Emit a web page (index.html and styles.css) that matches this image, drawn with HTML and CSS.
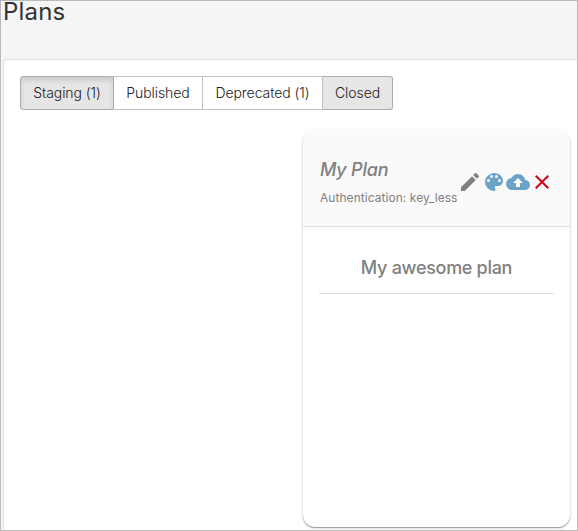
FILE: index.html
```html
<!DOCTYPE html>
<html lang="en">
<head>
<meta charset="utf-8">
<title>Plans</title>
<link rel="stylesheet" href="styles.css">
</head>
<body>
<main class="page">
  <h1 class="title"><span>Plans</span></h1>
  <section class="panel">
    <div class="tabs">
      <button class="tab tab-staging active"><span>Staging (1)</span></button>
      <button class="tab tab-published"><span>Published</span></button>
      <button class="tab tab-deprecated"><span>Deprecated (1)</span></button>
      <button class="tab tab-closed hover"><span>Closed</span></button>
    </div>
    <article class="card">
      <header class="card-head">
        <div class="info">
          <h2 class="name"><span>My Plan</span></h2>
          <p class="auth"><span>Authentication: key_less</span></p>
        </div>
        <div class="actions">
          <svg class="edit" viewBox="0 0 24 24"><path d="M3 17.25V21h3.75L17.81 9.94l-3.75-3.75L3 17.25zM20.71 7.04a1 1 0 0 0 0-1.41l-2.34-2.34a1 1 0 0 0-1.41 0l-1.83 1.83 3.75 3.75 1.83-1.83z"/></svg>
          <svg class="design" viewBox="0 0 24 24"><path d="M12 3a9 9 0 0 0 0 18c.83 0 1.5-.67 1.5-1.5 0-.39-.15-.74-.39-1.01-.23-.26-.38-.61-.38-.99 0-.83.67-1.5 1.5-1.5H16c2.76 0 5-2.24 5-5 0-4.42-4.03-8-9-8zm-5.5 9a1.5 1.5 0 1 1 0-3 1.5 1.5 0 0 1 0 3zm3-4a1.5 1.5 0 1 1 0-3 1.5 1.5 0 0 1 0 3zm5 0a1.5 1.5 0 1 1 0-3 1.5 1.5 0 0 1 0 3zm3 4a1.5 1.5 0 1 1 0-3 1.5 1.5 0 0 1 0 3z"/></svg>
          <svg class="publish" viewBox="0 0 24 24"><path d="M19.35 10.04A7.49 7.49 0 0 0 12 4C9.11 4 6.6 5.64 5.35 8.04A5.994 5.994 0 0 0 0 14c0 3.31 2.69 6 6 6h13c2.76 0 5-2.24 5-5 0-2.64-2.05-4.78-4.65-4.96zM14 13v4h-4v-4H7l5-5 5 5h-3z"/></svg>
          <svg class="close" viewBox="0 0 24 24"><path d="M19 6.41 17.59 5 12 10.59 6.41 5 5 6.41 10.59 12 5 17.59 6.41 19 12 13.41 17.59 19 19 17.59 13.41 12z"/></svg>
        </div>
      </header>
      <div class="card-body"><p class="desc"><span>My awesome plan</span></p></div>
    </article>
  </section>
</main>
</body>
</html>
```
FILE: styles.css
```css
* { box-sizing: border-box; }
body { margin: 0; font-family: Inter, "Liberation Sans", sans-serif; }
h1, h2, p { margin: 0; white-space: nowrap; }
.page { display: flex; flex-direction: column; width: 578px; height: 531px; overflow: hidden; background: #f5f5f5; border: 1px solid #bababa; padding-left: 2px; }
.title { height: 58px; font-size: 24px; line-height: 22px; font-weight: 400; letter-spacing: 0.2px; color: #333; }
.panel { display: flex; flex-direction: column; flex: 1; background: #fff; border: 1px solid #e0e0e0; border-width: 1px 0 0 1px; border-top-left-radius: 4px; padding: 16px 6px 3px 16px; }
.tabs { display: flex; height: 34px; flex: none; }
.tab { padding: 0; background: #fff; border: 1px solid #c2c2c2; border-left-width: 0; font: 300 14px/20px Inter, sans-serif; letter-spacing: -0.06px; color: #222; white-space: nowrap; }
.tab-staging { width: 94px; border-left-width: 1px; border-radius: 3px 0 0 3px; }
.tab-published { width: 89px; }
.tab-deprecated { width: 120px; }
.tab-closed { width: 70px; border-radius: 0 3px 3px 0; }
.active, .hover { background: #e6e6e6; border-color: #adadad; }
.active { box-shadow: inset 0 3px 5px rgba(0,0,0,.13); }
.card { align-self: flex-end; width: 267px; height: 397px; margin: 20px 1px 0 0; border-radius: 12px; overflow: hidden; box-shadow: 0 1px 1px rgba(0,0,0,.3), 0 1px 3px rgba(0,0,0,.18); }
.card-head { display: flex; height: 97px; background: #fafafa; border-bottom: 1px solid #dedede; padding-left: 17px; }
.info { width: 138px; padding-top: 28px; }
.name { font-size: 18px; line-height: 24px; font-weight: 500; font-style: italic; letter-spacing: -0.2px; color: #808080; }
.auth { margin-top: 8px; font-size: 12px; line-height: 16px; letter-spacing: 0.05px; color: #808080; }
.actions { display: flex; padding-top: 40px; }
.actions svg { width: 24px; height: 24px; fill: #6ba2c7; }
.actions .edit { fill: #808080; }
.actions .close { fill: #d0021b; }
.card-body { padding: 0 16px; }
.desc { height: 67px; border-bottom: 1px solid #dedede; padding-top: 29px; text-align: center; font-size: 18px; line-height: 24px; font-weight: 500; letter-spacing: -0.3px; color: #808080; }
```
